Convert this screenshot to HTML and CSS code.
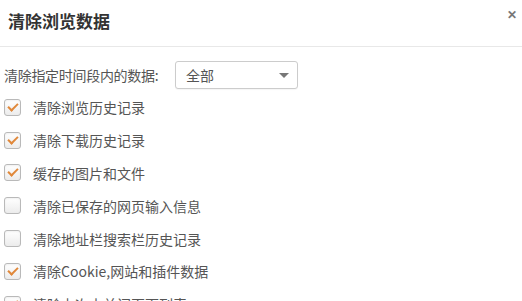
FILE: index.html
```html
<!DOCTYPE html>
<html lang="zh-CN">
<head>
<meta charset="utf-8">
<title>清除浏览数据</title>
<link rel="stylesheet" href="styles.css">
</head>
<body>
<div class="dialog">
  <div class="header">
    <h1 class="title">清除浏览数据</h1>
    <span class="close">&#x2715;</span>
  </div>
  <div class="content">
    <div class="range-row">
      <span class="range-label">清除指定时间段内的数据:</span>
      <div class="select">
        <span class="select-value">全部</span>
        <span class="select-arrow"></span>
      </div>
    </div>
    <ul class="options">
      <li class="option"><span class="box checked"></span><span class="opt-text">清除浏览历史记录</span></li>
      <li class="option"><span class="box checked"></span><span class="opt-text">清除下载历史记录</span></li>
      <li class="option"><span class="box checked"></span><span class="opt-text">缓存的图片和文件</span></li>
      <li class="option"><span class="box"></span><span class="opt-text">清除已保存的网页输入信息</span></li>
      <li class="option"><span class="box"></span><span class="opt-text">清除地址栏搜索栏历史记录</span></li>
      <li class="option"><span class="box checked"></span><span class="opt-text">清除Cookie,网站和插件数据</span></li>
      <li class="option"><span class="box checked"></span><span class="opt-text">清除上次未关闭页面列表</span></li>
    </ul>
  </div>
</div>
</body>
</html>
```
FILE: styles.css
```css
html, body {
  margin: 0;
  padding: 0;
  background: #ffffff;
}
body {
  font-family: "Noto Sans CJK SC", "Noto Sans", sans-serif;
  color: #555555;
  overflow: hidden;
  height: 301px;
}
.dialog {
  width: 522px;
}
.header {
  height: 46px;
  border-bottom: 1px solid #e8e8e8;
  display: flex;
  align-items: center;
  justify-content: space-between;
  padding: 0 5px 0 8px;
  box-sizing: content-box;
}
.title {
  margin: 0;
  font-size: 17px;
  font-weight: bold;
  color: #333333;
  line-height: 22px;
  position: relative;
  top: -2px;
}
.close {
  font-size: 12px;
  font-weight: bold;
  color: #777777;
  line-height: 14px;
  position: relative;
  top: -9px;
}
.content {
  padding: 14px 0 0 4px;
}
.range-row {
  display: flex;
  align-items: center;
  height: 28px;
}
.range-label {
  font-size: 14px;
  line-height: 20px;
  width: 171px;
  letter-spacing: -0.3px;
}
.select {
  width: 119px;
  height: 26px;
  border: 1px solid #cccccc;
  border-radius: 3px;
  display: flex;
  align-items: center;
  justify-content: space-between;
  padding: 0 8px 0 10px;
  box-sizing: content-box;
  width: 103px;
  background: #ffffff;
  box-shadow: 0 1px 1px rgba(0,0,0,0.04);
}
.select-value {
  font-size: 14px;
  color: #555555;
  line-height: 20px;
}
.select-arrow {
  width: 0;
  height: 0;
  border-left: 5px solid transparent;
  border-right: 5px solid transparent;
  border-top: 5px solid #777777;
}
.options {
  list-style: none;
  margin: 2px 0 0 0;
  padding: 0;
}
.option {
  display: flex;
  align-items: center;
  height: 32.8px;
}
.box {
  width: 15px;
  height: 15px;
  border: 1px solid #b9b9b9;
  border-radius: 3px;
  background: linear-gradient(#ffffff, #ececec);
  box-shadow: inset 0 1px 2px rgba(0,0,0,0.06);
  position: relative;
  flex: none;
}
.box.checked::after {
  content: "";
  position: absolute;
  left: 5px;
  top: 1px;
  width: 4px;
  height: 8px;
  border-right: 2px solid #e0883a;
  border-bottom: 2px solid #e0883a;
  transform: rotate(45deg);
}
.opt-text {
  margin-left: 12px;
  font-size: 14px;
  line-height: 20px;
}
```
